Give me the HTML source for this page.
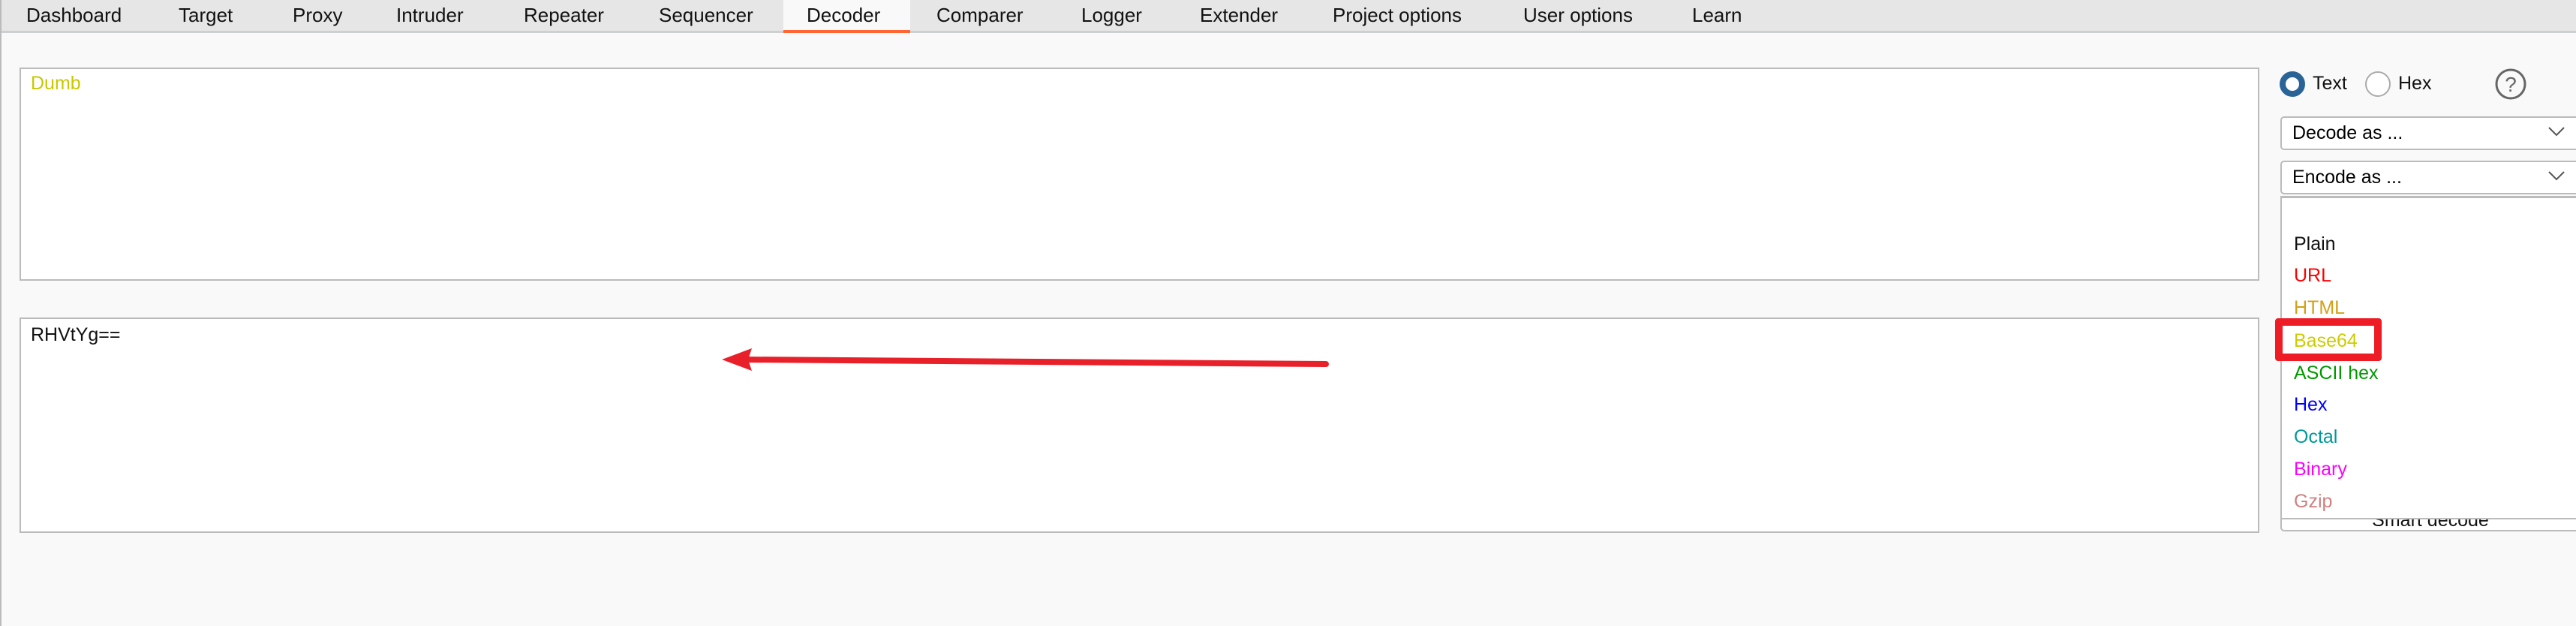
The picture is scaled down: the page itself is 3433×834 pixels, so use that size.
<!DOCTYPE html>
<html><head><meta charset="utf-8"><style>
*{margin:0;padding:0;box-sizing:border-box}
body{width:3433px;height:834px;background:#f9f9f9;position:relative;overflow:hidden;font-family:"Liberation Sans",sans-serif;border-left:2px solid #bbb}
.tabbar{position:absolute;left:0;top:0;width:3433px;height:44px;background:#e6e6e6;border-bottom:3px solid #cdd0d0}
.tab{position:absolute;top:5px;font-size:26px;color:#111;white-space:nowrap}
.active{position:absolute;left:1042px;top:0;width:169px;height:44px;background:#f9f9f9;border-bottom:4px solid #ff6633}
.ta{position:absolute;left:24px;width:2985px;background:#fff;border:2px solid #bbb}
.txt{position:absolute;font-size:25px}
.dd{position:absolute;left:3037px;width:400px;background:#fff;border:2px solid #bbb;border-radius:5px;font-size:25px;padding-left:14px}
.chev{position:absolute;right:18px;top:10px}
.list{position:absolute;left:3037px;top:261px;width:400px;height:431px;background:#fff;border:2px solid #bbb;border-top:3px solid #bbb;z-index:2}
.it{position:absolute;left:16px;font-size:25px;line-height:30px}
</style></head><body>
<div class="tabbar"></div>
<div class="active"></div>
<div class="tab" style="left:33px">Dashboard</div>
<div class="tab" style="left:236px">Target</div>
<div class="tab" style="left:388px">Proxy</div>
<div class="tab" style="left:526px">Intruder</div>
<div class="tab" style="left:696px">Repeater</div>
<div class="tab" style="left:876px">Sequencer</div>
<div class="tab" style="left:1073px">Decoder</div>
<div class="tab" style="left:1246px">Comparer</div>
<div class="tab" style="left:1439px">Logger</div>
<div class="tab" style="left:1597px">Extender</div>
<div class="tab" style="left:1774px">Project options</div>
<div class="tab" style="left:2028px">User options</div>
<div class="tab" style="left:2253px">Learn</div>

<div class="ta" style="top:90px;height:284px"></div>
<div class="txt" style="left:39px;top:97px;color:#c8c800">Dumb</div>
<div class="ta" style="top:423px;height:287px"></div>
<div class="txt" style="left:39px;top:432px;color:#111">RHVtYg==</div>

<svg style="position:absolute;left:0;top:0" width="3433" height="834">
<line x1="1765" y1="485" x2="990" y2="479" stroke="#e8202a" stroke-width="8" stroke-linecap="round"/>
<polygon points="960,479 1000,464 995,479 1000,494" fill="#e8202a"/>
<circle cx="3053" cy="112" r="13" fill="#fff" stroke="#2a6496" stroke-width="8"/>
<circle cx="3167" cy="112" r="16" fill="#fff" stroke="#aaa" stroke-width="2"/>
<circle cx="3344" cy="112" r="19" fill="none" stroke="#666" stroke-width="3"/>
<text x="3344" y="122" font-family="Liberation Sans" font-size="28" fill="#666" text-anchor="middle">?</text>
</svg>
<div class="txt" style="left:3080px;top:97px;color:#111">Text</div>
<div class="txt" style="left:3194px;top:97px;color:#111">Hex</div>

<div class="dd" style="top:155px;height:45px;line-height:41px">Decode as ...<svg class="chev" width="24" height="16"><path d="M2 3 L12 13 L22 3" fill="none" stroke="#555" stroke-width="2"/></svg></div>
<div class="dd" style="top:214px;height:45px;line-height:41px">Encode as ...<svg class="chev" width="24" height="16"><path d="M2 3 L12 13 L22 3" fill="none" stroke="#555" stroke-width="2"/></svg></div>
<div class="dd" style="top:660px;height:48px;line-height:30px;text-align:center;padding:0;color:#111;overflow:hidden"><span style="position:relative;top:16px">Smart decode</span></div>
<div class="list">
<div class="it" style="top:46px;color:#111">Plain</div>
<div class="it" style="top:88px;color:#f00">URL</div>
<div class="it" style="top:131px;color:#d4a017">HTML</div>
<div class="it" style="top:175px;color:#cccc00">Base64</div>
<div class="it" style="top:218px;color:#009900">ASCII hex</div>
<div class="it" style="top:260px;color:#0000ff">Hex</div>
<div class="it" style="top:303px;color:#009999">Octal</div>
<div class="it" style="top:346px;color:#ff00ff">Binary</div>
<div class="it" style="top:389px;color:#d08080">Gzip</div>
</div>
<div style="position:absolute;left:3030px;top:424px;width:142px;height:57px;border:10px solid #ee1c25;border-radius:4px;z-index:3"></div>
</body></html>
